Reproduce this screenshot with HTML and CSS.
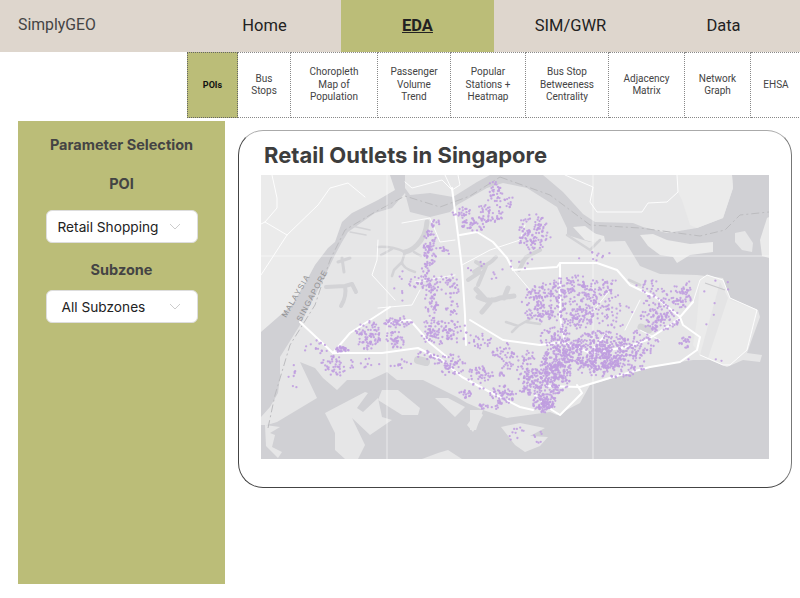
FILE: index.html
```html
<!DOCTYPE html>
<html>
<head>
    <title>SimplyGEO - EDA</title>
    <link rel="stylesheet" href="styles.css">
</head>
<body>
    <div class="topbar">
        <div class="brand">SimplyGEO</div>
        <a class="nav-item">Home</a>
        <a class="nav-item active">EDA</a>
        <a class="nav-item">SIM/GWR</a>
        <a class="nav-item">Data</a>
    </div>

    <div class="tabs">
        <a class="tab tab-pois active">POIs</a>
        <a class="tab tab-bus">Bus<br>Stops</a>
        <a class="tab tab-choro">Choropleth<br>Map of<br>Population</a>
        <a class="tab tab-volume">Passenger<br>Volume<br>Trend</a>
        <a class="tab tab-popular">Popular<br>Stations +<br>Heatmap</a>
        <a class="tab tab-between">Bus Stop<br>Betweeness<br>Centrality</a>
        <a class="tab tab-adjacency">Adjacency<br>Matrix</a>
        <a class="tab tab-network">Network<br>Graph</a>
        <a class="tab tab-ehsa">EHSA</a>
    </div>

    <div class="main">
        <div class="sidebar">
            <h3 class="side-title">Parameter Selection</h3>
            <h3 class="field-label">POI</h3>
            <div class="select select-poi">
                <span>Retail Shopping</span>
                <svg class="chevron" width="12" height="7" viewBox="0 0 12 7"><path d="M1 1l5 5 5-5"/></svg>
            </div>
            <h3 class="field-label field-subzone">Subzone</h3>
            <div class="select select-zone">
                <span>All Subzones</span>
                <svg class="chevron" width="12" height="7" viewBox="0 0 12 7"><path d="M1 1l5 5 5-5"/></svg>
            </div>
        </div>

        <div class="card">
            <h2 class="card-title">Retail Outlets in Singapore</h2>
            <svg class="map" id="map" width="508" height="284" viewBox="261 175 508 284">
                <rect class="water" x="261" y="175" width="508" height="284"/>

                <!-- johor side -->
                <path class="land-pale" d="M261 175H390L395 190 378 200 352 213 342 222 335 242 328 248 315 265 308 278 292 305 285 311 261 332Z"/>
                <path class="land" d="M405 175H490L477 182 453 197 430 193 410 195 405 188Z"/>
                <path class="land" d="M543 175H732L733 188 723 218 697 228 667 233 643 227 633 223 595 222 583 214 563 192Z"/>
                <path class="land-pale" d="M677 175H732L733 188 723 218 697 228 690 225 682 200 678 192Z"/>
                <path class="land" d="M735 233L745 231 753 243 752 252 742 250 735 242Z"/>
                <path class="land-pale" d="M767 218L769 217V258L762 256 760 240Z"/>

                <!-- ubin and tekong -->
                <path class="land-pale" d="M640 235L653 234 667 240 690 244 713 242 713 252 690 255 677 263 673 257 660 255 648 246Z"/>
                <path class="land-pale" d="M573 227L585 226 597 235 596 243 585 240Z"/>
                <path class="land-pale" d="M593 233L604 236 606 245 597 243Z"/>

                <!-- main island -->
                <path class="land" d="M405 193L392 208 375 213 348 232 342 242 335 255 322 282 305 315 300 325 280 357 280 377 278 393 270 407 261 417V425H267L277 422 317 398 300 362 315 368 323 378 337 390 347 380 370 380 387 372 397 380 423 380 437 387 457 397 467 403 483 410 507 418 550 412 557 415 580 403 590 385 600 382 627 373 653 367 680 362 693 360 710 360 727 367 743 360 760 362 762 355 747 353 760 317 758 310 730 298 723 278 697 275 660 274 640 266 625 241 590 242 567 235 567 228 557 207 527 188 503 183 487 188 457 205 450 212 430 217 410 212Z"/>
                <path class="land-pale" d="M700 280L707 275 723 280 730 300 757 310 747 350 730 365 723 365 700 355 693 345 697 320Z"/>
                <path class="land-fold" d="M720 282L700 355 708 358 728 298Z"/>

                <!-- southern islands -->
                <path class="land" d="M325 413L365 392 368 393 357 408 363 412 378 398 382 417 392 420 370 435 352 418 365 445 358 459H345L335 450 335 433Z"/>
                <path class="land" d="M382 390H398L420 408 418 415H402L378 400Z"/>
                <path class="land" d="M435 398H448L465 407 455 417Z"/>
                <path class="land" d="M478 410L483 415 473 432 467 425Z"/>
                <path class="land" d="M422 459L438 453 448 450 462 459Z"/>
                <path class="land" d="M265 425L280 427 270 433 275 435 272 447 282 452 278 458 266 446Z"/>
                <path class="land" d="M501 427L520 423 545 428 530 436 548 437 540 446 525 452 515 445Z"/>
                <path class="land" d="M470 410H483L476 430H470Z"/>

                <!-- reservoirs and inlets -->
                <g class="inlet">
                    <path stroke-width="5" d="M427 222Q426 236 417 245 411 251 405 252"/>
                    <path stroke-width="2.5" d="M405 252Q392 246 378 247M392 249L381 255M405 252L402 262Q402 268 415 272M402 262L394 270 392 276M414 252L421 256"/>
                    <path stroke-width="3" d="M342 258L344 272M338 262L350 258"/>
                    <path stroke-width="4" d="M326 287L345 286 352 284M345 286Q347 296 341 306M352 284L356 292"/>
                    <path stroke-width="1.5" d="M350 232L366 235M352 226L370 230"/>
                    <path stroke-width="4" d="M496 257Q490 264 483 266L474 272M483 266L476 262M486 266L478 285M480 272L468 280"/>
                    <path stroke-width="5" d="M478 297Q490 303 500 298L514 296M492 300L482 312M504 298L508 288M486 300L476 289"/>
                    <path stroke-width="4" d="M540 250L528 256 522 262M526 257L519 270"/>
                    <path stroke-width="2.5" d="M567 235L590 250 600 240"/>
                    <path stroke-width="3" d="M629 280L640 285"/>
                    <path stroke-width="8" d="M418 360L426 362"/>
                    <path stroke-width="2.5" d="M506 322L518 326 532 318M518 326L512 332M526 322L540 324"/>
                    <path stroke-width="7" d="M641 327L649 330"/>
                </g>

                <!-- border between the two sides -->
                <path class="border-line" d="M268 428L275 395 290 345 315 305 330 260 345 230 375 212 405 196 440 207 470 196 500 177M500 177L550 195 590 225 640 228 700 236 725 230 740 215 769 212"/>
                <path class="chart-grid" d="M387 175V459M593 175V459M261 256H769"/>

                <g class="road">
                    <path d="M452 188L458 235 462 268 465 315 466 345"/>
                    <path d="M460 235L477 232 493 242 507 258 513 270 557 267 560 263 597 263 617 270 630 285 657 298 680 317 683 325 700 337 697 350 680 362 650 367 613 377 580 387 545 386"/>
                    <path d="M300 322L333 353H382L418 348 442 360 462 377 490 392 520 407 533 410"/>
                    <path d="M333 353L350 333 367 322 390 307M387 323L410 320 430 343 447 357"/>
                    <path d="M470 320L503 340 540 345 563 342 577 347 590 353 627 347 647 340 667 327 680 318"/>
                    <path d="M560 263V317L565 343M607 333L590 353M577 385L582 393 560 415 552 410 535 395"/>
                    <path d="M693 302L680 317"/>
                </g>
                <g class="road-thin">
                    <path d="M261 275L287 235 318 205 330 188 348 183 365 197"/>
                    <path d="M272 175L277 198 277 208 265 222 261 224M265 222L287 235"/>
                    <path d="M565 175L593 187 590 202 597 212 642 212 648 203 667 202 678 192 677 175"/>
                    <path d="M405 182L412 188 442 180 452 190 445 175M452 190L460 185 458 175"/>
                    <path d="M402 223L430 218 440 242 455 240M378 240L377 260 372 275 395 300"/>
                    <path d="M415 282L455 275M378 308L412 305 420 290"/>
                    <path d="M462 265L490 250 520 240 525 225M513 270L530 290M590 315L610 290M640 300L625 330M640 330L660 340"/>
                    <path d="M730 298L723 280 707 275 700 280 693 302M700 355L723 365 730 365 747 350 757 310 730 298"/>
                </g>
                <path class="runway" d="M705 283L725 290"/>

                <text class="map-label" transform="translate(286 318) rotate(-60)">MALAYSIA</text>
                <text class="map-label" transform="translate(301 322) rotate(-62)">SINGAPORE</text>

                <g id="points"></g>
            </svg>
        </div>
    </div>
    <script src="map.js"></script>
</body>
</html>
```

FILE: styles.css
```css
body {
    margin: 0;
    background-color: white;
    font-family: "Roboto", "Noto Sans", sans-serif;
    color: #222;
    overflow: hidden;
}
.topbar {
    display: flex;
    height: 52px;
    background-color: #ded6cd;
}
.brand {
    width: 170px;
    padding-left: 18px;
    font-size: 15.8px;
    line-height: 50px;
    color: #444;
}
.nav-item {
    width: 153px;
    text-align: center;
    font-size: 16.5px;
    line-height: 52px;
    color: #222;
}
.nav-item.active {
    background-color: #bbbd78;
    font-weight: 700;
    text-decoration: underline;
}
.tabs {
    display: flex;
    height: 66px;
    margin-left: 187px;
    overflow: hidden;
}
.tab {
    display: flex;
    align-items: center;
    justify-content: center;
    box-sizing: border-box;
    flex: none;
    text-align: center;
    font-size: 10px;
    line-height: 12.5px;
    color: #444;
    border: 1px dotted #888;
    border-left-width: 0;
}
.tab.active {
    background-color: #bbbd78;
    border-left-width: 1px;
    border-color: #666;
    color: #111;
    font-weight: 700;
    font-size: 9px;
}
.tab-pois { width: 51px; }
.tab-bus { width: 53px; }
.tab-choro { width: 87px; }
.tab-volume { width: 73px; }
.tab-popular { width: 75px; }
.tab-between { width: 83px; }
.tab-adjacency { width: 76px; }
.tab-network { width: 66px; }
.tab-ehsa { width: 50px; border-right-width: 0; }

.main {
    display: flex;
    align-items: flex-start;
    gap: 13px;
    margin: 3px 0 0 18px;
}
.sidebar {
    display: flex;
    flex-direction: column;
    align-items: center;
    box-sizing: border-box;
    width: 207px;
    height: 463px;
    padding-top: 15px;
    background-color: #bbbd78;
    font-family: "Inter", "Noto Sans", sans-serif;
}
.side-title,
.field-label {
    margin: 0;
    font-size: 14.5px;
    line-height: 18px;
    font-weight: 700;
    color: #444;
}
.field-label {
    margin-top: 21px;
    margin-bottom: 17px;
}
.field-subzone {
    margin-top: 18px;
    margin-bottom: 11px;
}
.select {
    display: flex;
    align-items: center;
    box-sizing: border-box;
    width: 152px;
    height: 33px;
    background-color: white;
    border: 1px solid #ddd;
    border-radius: 6px;
    font-size: 13.7px;
    color: #222;
}
.select span {
    flex: 1;
}
.select-poi span {
    padding-left: 11px;
}
.select-zone span {
    padding-left: 15px;
}
.chevron {
    margin-right: 16px;
    fill: none;
    stroke: #ccc;
    stroke-width: 1;
}
.card {
    box-sizing: border-box;
    width: 554px;
    height: 358px;
    margin-top: 9px;
    padding: 10px 22px 0;
    border: 1px solid #444;
    border-top-color: #aaa;
    border-right-color: #777;
    border-radius: 25px;
}
.card-title {
    margin: 0 0 6px 3px;
    font-family: "Inter", "Noto Sans", sans-serif;
    font-size: 22px;
    line-height: 28px;
    font-weight: 700;
    color: #3d3d3d;
}
.map {
    display: block;
}
.water { fill: #d0d0d4; }
.land { fill: #e6e6e7; }
.land-pale { fill: #ebebeb; }
.land-fold { fill: #e4e4e5; }
.inlet path {
    fill: none;
    stroke: #d3d3d6;
    stroke-linecap: round;
    stroke-linejoin: round;
}
.border-line {
    fill: none;
    stroke: #bcbcbf;
    stroke-width: 1;
    stroke-dasharray: 8 3 2 3;
}
.chart-grid {
    fill: none;
    stroke: white;
    stroke-opacity: 0.55;
    stroke-width: 1;
}
.road path,
.road-thin path {
    fill: none;
    stroke: white;
    stroke-linejoin: round;
    stroke-linecap: round;
}
.road path { stroke-width: 2; }
.road-thin path { stroke-width: 1; stroke-opacity: 0.9; }
.runway {
    stroke: #c8c8ca;
    stroke-width: 1.2;
}
.map-label {
    font-family: "Liberation Sans", sans-serif;
    font-size: 8px;
    letter-spacing: 1.1px;
    fill: #8f8f91;
}
.dot {
    fill: #c09ee0;
    fill-opacity: 0.9;
}
```

FILE: map.js
```js
// retail points are scattered from a list of clusters: [x, y, radius x, radius y, count]
const clusters = [
    // north
    [462, 212, 8, 5, 22], [475, 223, 12, 7, 45], [490, 213, 12, 8, 45], [494, 192, 8, 9, 32],
    [507, 202, 8, 6, 14], [533, 233, 13, 17, 100], [546, 238, 5, 5, 7],
    [430, 248, 6, 16, 70], [427, 270, 5, 9, 16], [445, 251, 5, 5, 10], [432, 223, 8, 4, 12],
    [430, 283, 19, 7, 65], [452, 287, 6, 11, 22], [432, 305, 7, 12, 35], [452, 310, 6, 8, 16],
    // north east
    [545, 300, 20, 14, 120], [572, 290, 18, 14, 100], [540, 315, 13, 6, 45], [595, 300, 15, 20, 110],
    [575, 318, 16, 10, 85], [610, 290, 8, 10, 14], [650, 287, 12, 6, 20], [620, 318, 12, 12, 22],
    [682, 293, 10, 12, 42], [665, 302, 18, 10, 50], [660, 318, 18, 10, 95], [686, 342, 7, 5, 20],
    [645, 340, 15, 12, 35],
    // centre and east
    [556, 370, 13, 20, 300], [545, 403, 10, 8, 130], [600, 350, 26, 16, 340], [533, 382, 14, 12, 130],
    [555, 338, 13, 9, 70], [610, 365, 30, 11, 170], [635, 347, 14, 8, 45], [503, 395, 11, 8, 65],
    [480, 377, 11, 10, 45], [487, 407, 10, 3, 16], [503, 365, 7, 10, 22], [505, 350, 14, 6, 24],
    [480, 340, 10, 7, 24], [522, 360, 13, 9, 35], [570, 350, 10, 10, 70], [515, 433, 11, 6, 10], [539, 437, 6, 5, 7],
    // west
    [368, 335, 11, 12, 85], [342, 349, 6, 3, 32], [398, 322, 12, 5, 42], [395, 340, 9, 8, 40],
    [435, 332, 12, 12, 75], [450, 365, 13, 9, 60], [337, 365, 15, 9, 50], [315, 347, 11, 7, 14],
    [293, 375, 4, 15, 8], [466, 394, 6, 4, 18], [428, 355, 10, 4, 18], [455, 332, 10, 10, 40],
    [400, 365, 12, 5, 12], [370, 365, 10, 6, 8],
    // loose points
    [395, 290, 10, 20, 7], [720, 285, 18, 8, 4], [715, 315, 10, 15, 3], [600, 255, 20, 6, 10],
    [520, 262, 12, 6, 6], [475, 265, 10, 5, 5], [500, 275, 10, 8, 5], [700, 360, 20, 2, 3]
];

// small seeded generator so the picture is the same on every load
let seed = 1234;
function rand() {
    seed = (seed * 16807) % 2147483647;
    return (seed - 1) / 2147483646;
}

const points = document.getElementById('points');
clusters.forEach(function (c) {
    for (let i = 0; i < c[4]; i++) {
        const angle = rand() * Math.PI * 2;
        // thicker in the middle, thin at the edge
        const dist = Math.pow(rand(), 0.65) * 1.2;
        const dot = document.createElementNS('http://www.w3.org/2000/svg', 'circle');
        dot.setAttribute('class', 'dot');
        dot.setAttribute('cx', (c[0] + Math.cos(angle) * dist * c[2]).toFixed(1));
        dot.setAttribute('cy', (c[1] + Math.sin(angle) * dist * c[3]).toFixed(1));
        dot.setAttribute('r', '1.15');
        points.appendChild(dot);
    }
});
```
